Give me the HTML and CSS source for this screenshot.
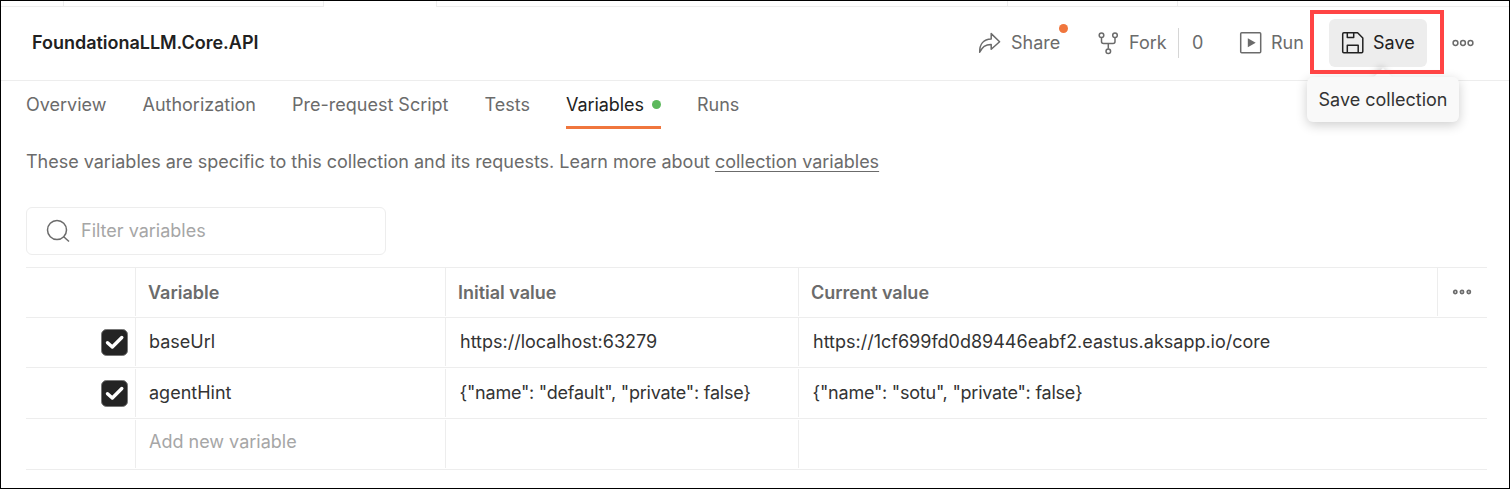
FILE: index.html
```html
<!DOCTYPE html>
<html lang="en">
<head>
<meta charset="utf-8">
<title>FoundationaLLM.Core.API</title>
<link rel="stylesheet" href="styles.css">
</head>
<body>
<div class="window">
  <div class="tabstrip">
    <span class="strip-a"></span><span class="strip-b"></span><span class="strip-active"></span><span class="strip-c"></span><span class="strip-d"></span><span class="strip-e"></span>
  </div>
  <header class="header">
    <h1 class="title">FoundationaLLM.Core.API</h1>
    <div class="actions">
      <div class="action share">
        <svg class="icon" width="24" height="24" viewBox="0 0 24 24"><path d="M1.7 21.3C1.5 13.5 5.5 8.3 13.2 8.1V2.6L21.6 10.7L13.2 18.3V13.4C8 13.3 4.3 15.2 1.7 21.3Z"/></svg>
        <span>Share</span><i class="notice"></i>
      </div>
      <div class="action fork">
        <svg class="icon" width="24" height="24" viewBox="0 0 24 24"><circle cx="4.5" cy="4.3" r="2.3"/><circle cx="18" cy="4.3" r="2.3"/><circle cx="11.3" cy="20.2" r="2.3"/><path d="M4.5 6.6V10.6Q4.5 12.6 6.5 12.6H16Q18 12.6 18 10.6V6.6M11.3 12.6V17.8"/></svg>
        <span>Fork</span>
      </div>
      <span class="count">0</span>
      <div class="action run">
        <svg class="icon" width="24" height="24" viewBox="0 0 24 24"><rect x="1.7" y="1.8" width="20" height="20" rx="1"/><path class="solid" d="M8.8 7.3L16.7 11.8L8.8 16.3Z"/></svg>
        <span>Run</span>
      </div>
      <div class="highlight">
        <div class="save">
          <svg class="icon" width="24" height="24" viewBox="0 0 24 24"><path d="M2.8 1.8H16.6L21.8 7V20.6Q21.8 21.8 20.6 21.8H2.8Q1.7 21.8 1.7 20.6V3Q1.7 1.8 2.8 1.8ZM6.3 1.8V6.6H12.7V1.8M6.3 21.8V14.3H17.2V21.8"/></svg>
          <span>Save</span>
        </div>
        <div class="tooltip">Save collection</div>
      </div>
      <svg class="more" width="22" height="8" viewBox="0 0 22 8"><circle cx="3.5" cy="4" r="2.4"/><circle cx="11" cy="4" r="2.4"/><circle cx="18.5" cy="4" r="2.4"/></svg>
    </div>
  </header>
  <nav class="tabs">
    <a class="tab">Overview</a>
    <a class="tab">Authorization</a>
    <a class="tab">Pre-request Script</a>
    <a class="tab">Tests</a>
    <a class="tab active">Variables<i class="status"></i></a>
    <a class="tab">Runs</a>
  </nav>
  <main class="content">
    <p class="description">These variables are specific to this collection and its requests. Learn more about <a class="link">collection variables</a></p>
    <div class="search">
      <svg class="icon" width="24" height="24" viewBox="0 0 24 24"><circle cx="11" cy="11" r="9.5"/><path d="M17.7 17.7L23 22.5"/></svg>
      <span>Filter variables</span>
    </div>
    <div class="table">
      <div class="row head">
        <div class="cell"></div><div class="cell">Variable</div><div class="cell">Initial value</div><div class="cell">Current value</div>
        <div class="cell options"><svg class="more small" width="20" height="8" viewBox="0 0 20 8"><circle cx="3.3" cy="4" r="1.6"/><circle cx="10" cy="4" r="1.6"/><circle cx="16.8" cy="4" r="1.6"/></svg></div>
      </div>
      <div class="row">
        <div class="cell pick"><svg class="check" width="27" height="27" viewBox="0 0 27 27"><rect x="0.5" y="0.5" width="26" height="26" rx="5"/><path d="M6.5 13.7L11.3 18L20.8 8.5"/></svg></div>
        <div class="cell">baseUrl</div><div class="cell value">https://localhost:63279</div><div class="cell value wide">https://1cf699fd0d89446eabf2.eastus.aksapp.io/core</div>
      </div>
      <div class="row tall">
        <div class="cell pick"><svg class="check" width="27" height="27" viewBox="0 0 27 27"><rect x="0.5" y="0.5" width="26" height="26" rx="5"/><path d="M6.5 13.7L11.3 18L20.8 8.5"/></svg></div>
        <div class="cell">agentHint</div><div class="cell value json">{"name": "default", "private": false}</div><div class="cell value json wide">{"name": "sotu", "private": false}</div>
      </div>
      <div class="row tall new">
        <div class="cell"></div><div class="cell">Add new variable</div><div class="cell"></div><div class="cell wide"></div>
      </div>
    </div>
  </main>
</div>
</body>
</html>
```
FILE: styles.css
```css
* { box-sizing: border-box; }
body { margin: 0; background: #fff; color: #6b6b6b; font: 18px/24px Inter, sans-serif; }
.window { width: 1510px; height: 489px; border: 1px solid #000; overflow: hidden; }
.icon, .more { flex: none; fill: none; stroke: currentColor; stroke-width: 1.5; stroke-linejoin: round; }
.solid { fill: currentColor; stroke: none; }

.tabstrip { display: flex; height: 6px; }
.tabstrip span { border-bottom: 1px solid #ededed; border-right: 1px solid #ededed; }
.tabstrip .strip-a { width: 63px; }
.strip-b { width: 260px; }
.tabstrip .strip-active { width: 113px; border-bottom: 0; }
.strip-c { width: 571px; }
.strip-d { width: 170px; }
.tabstrip .strip-e { flex: 1; border-right: 0; }

.header { display: flex; align-items: center; height: 74px; padding: 0 0 2px 31px; border-bottom: 1px solid #ededed; }
.title { margin: 0; font-size: 18px; font-weight: 600; color: #212121; letter-spacing: -0.02px; }
.actions { display: flex; align-items: center; margin-left: auto; padding-right: 35px; }
.action { position: relative; display: flex; align-items: center; gap: 8px; }
.share { width: 119px; gap: 9px; }
.fork { width: 81px; }
.notice { position: absolute; left: 81px; top: -7px; width: 9px; height: 9px; border-radius: 50%; background: #f0763d; }
.count { width: 61px; height: 30px; padding-left: 13px; border-left: 1px solid #d6d6d6; line-height: 30px; }
.run { width: 71px; }
.highlight { position: relative; width: 134px; height: 64px; padding: 9px 17px 7px 19px; margin-top: -2px; }
.highlight::after { content: ""; position: absolute; z-index: 2; inset: 0; border: 4px solid #ff4444; }
.save { display: flex; align-items: center; gap: 8px; height: 48px; width: 98px; padding-left: 12px; border-radius: 6px; background: #ededed; color: #212121; }
.tooltip { position: absolute; z-index: 1; left: -3px; top: 67px; width: 152px; height: 45px; border-radius: 6px; background: #f9f9f9; color: #333; line-height: 45px; text-align: center; white-space: nowrap; box-shadow: 0 3px 12px rgba(0,0,0,.2); }
.tooltip::before { content: ""; position: absolute; left: 67px; top: -9px; border: solid transparent; border-width: 0 9px 9px; border-bottom-color: #f9f9f9; filter: drop-shadow(-2px -2px 3px rgba(0,0,0,.2)); clip-path: inset(-9px -9px 0); }
.more { margin-left: 8px; }

.tabs { display: flex; gap: 36px; height: 48px; padding-left: 25px; }
.tab { display: flex; height: 48px; padding-top: 12px; }
.active { width: 95px; color: #212121; border-bottom: 3px solid #f0763d; letter-spacing: -0.05px; }
.status { flex: none; width: 9px; height: 9px; margin: 7px 0 0 auto; border-radius: 50%; background: #5cb85c; }

.content { padding: 21px 22px 0 25px; }
.description { margin: 0; letter-spacing: -0.01px; }
.link { text-decoration: underline; text-decoration-thickness: 1px; text-underline-offset: 3px; text-decoration-skip-ink: none; }
.search { display: flex; align-items: center; gap: 11px; width: 360px; height: 48px; margin-top: 33px; padding-left: 19px; border: 1px solid #ededed; border-radius: 6px; color: #6b6b6b; }
.search span { color: #a6a6a6; }

.table { margin-top: 12px; border-top: 1px solid #ededed; }
.row { display: grid; grid-template-columns: 109px 310px 353px 639px 1fr; height: 50px; padding-bottom: 1px; border-bottom: 1px solid #ededed; color: #333; }
.tall { height: 51px; padding-top: 1px; }
.cell { display: flex; align-items: center; padding-left: 13px; border-left: 1px solid #ededed; }
.cell:first-child { border-left: 0; padding: 0; }
.value { padding-left: 14px; }
.json { padding-left: 13.5px; letter-spacing: -0.23px; }
.head { color: #6b6b6b; font-weight: 600; }
.head .cell { padding: 2px 0 0 12px; }
.cell.wide { grid-column: 4 / -1; }
.pick { justify-content: flex-end; }
.check { margin-right: 7px; fill: #242424; stroke: #777; stroke-width: 1; }
.check path { fill: none; stroke: #fff; stroke-width: 3.4; stroke-linecap: round; stroke-linejoin: round; }
.new { color: #a6a6a6; }
.new .cell { padding-bottom: 4px; }
.head .options { padding: 0 0 0 14px; }
.more.small { margin: 0; stroke-width: 1.7; }
```
